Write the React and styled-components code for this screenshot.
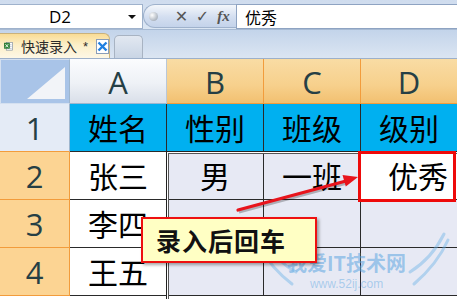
import React from "react";
import styled, { createGlobalStyle, css } from "styled-components";

const Global = createGlobalStyle`
  html, body { margin: 0; padding: 0; background: #fff; }
  body { width: 457px; height: 299px; overflow: hidden; font-family: "Noto Sans", "Noto Sans CJK SC", sans-serif; }
`;

const Page = styled.div`
  position: relative;
  width: 457px;
  height: 299px;
  overflow: hidden;
  display: flex;
  flex-direction: column;
`;

/* ---------- formula bar ---------- */
const FormulaBar = styled.div`
  height: 30px;
  flex: none;
  display: flex;
  align-items: flex-start;
  padding-top: 4px;
  box-sizing: border-box;
  background: linear-gradient(#cfdcee, #dbe6f3);
  border-bottom: 1px solid #a7bad3;
`;

const NameBox = styled.div`
  width: 143px;
  height: 25px;
  box-sizing: border-box;
  background: #fff;
  border: 1px solid #9fb2cc;
  border-left: none;
  display: flex;
  align-items: center;
  position: relative;
  font-family: "Open Sans", "Liberation Sans", sans-serif;
  font-size: 17px;
  color: #000;
`;

const NameText = styled.span`
  flex: 1;
  text-align: center;
  padding-right: 22px;
`;

const DropArrow = styled.span`
  position: absolute;
  right: 6px;
  top: 10px;
  width: 0;
  height: 0;
  border-left: 4px solid transparent;
  border-right: 4px solid transparent;
  border-top: 4px solid #111;
`;

const FxPill = styled.div`
  width: 93px;
  height: 24px;
  box-sizing: border-box;
  border: 1px solid #9fb2cc;
  border-right: none;
  border-radius: 12px 0 0 12px;
  background: linear-gradient(#f4f7fb, #d3def0 55%, #c4d3ea);
  display: flex;
  align-items: center;
  padding-left: 5px;
`;

const Knob = styled.span`
  width: 9px;
  height: 9px;
  border-radius: 50%;
  background: radial-gradient(circle at 35% 35%, #fff, #b9c0c9 60%, #8f98a3);
  margin-right: 13px;
`;

const FxIcon = styled.span`
  width: 21px;
  display: flex;
  justify-content: center;
  color: #555;
  font-size: ${(p) => p.$size || 15}px;
  font-family: ${(p) => (p.$serif ? '"Liberation Serif", serif' : '"DejaVu Sans", sans-serif')};
  font-style: ${(p) => (p.$serif ? "italic" : "normal")};
  font-weight: bold;
`;

const FormulaInput = styled.div`
  flex: 1;
  height: 25px;
  box-sizing: border-box;
  background: #fff;
  border: 1px solid #8ea3c2;
  border-right: none;
  display: flex;
  align-items: center;
  padding-left: 8px;
  font-family: "Noto Sans CJK SC", sans-serif;
  font-size: 16px;
  color: #000;
`;

/* ---------- tab strip ---------- */
const TabStrip = styled.div`
  height: 29px;
  flex: none;
  box-sizing: border-box;
  background: linear-gradient(#c3d4ea, #dbe5f2);
  border-bottom: 1px solid #9db0ca;
  display: flex;
  align-items: flex-end;
  gap: 4px;
  padding-top: 3px;
`;

const Tab = styled.div`
  width: 110px;
  height: 25px;
  box-sizing: border-box;
  border: 1px solid #c9b27c;
  border-bottom: none;
  border-left: none;
  border-radius: 0 6px 0 0;
  background: linear-gradient(#f9dc95, #fcefc8 45%, #fdf7e6);
  display: flex;
  align-items: center;
  padding-left: 4px;
  font-family: "Noto Sans CJK SC", sans-serif;
  font-size: 14px;
  color: #2b2b2b;
`;

const Label = styled.span`
  margin-left: 8px;
  white-space: nowrap;
`;

const Star = styled.span`
  margin-left: 6px;
  font-family: "Liberation Sans", sans-serif;
  font-size: 13px;
`;

const CloseBox = styled.span`
  margin-left: 8px;
  width: 15px;
  height: 15px;
  box-sizing: border-box;
  border: 1px solid #8a9db8;
  background: #fff;
  display: flex;
  align-items: center;
  justify-content: center;
`;

const EmptyTab = styled.div`
  width: 29px;
  height: 23px;
  box-sizing: border-box;
  border: 1px solid #a8b3c2;
  border-bottom: none;
  border-radius: 5px 5px 0 0;
  background: linear-gradient(#e2e8f1, #c9d5e5);
`;

/* ---------- sheet ---------- */
const Grid = styled.div`
  display: grid;
  grid-template-columns: 70px repeat(4, 97px);
  grid-template-rows: 45px repeat(4, 48px);
  flex: none;
`;

const Corner = styled.div`
  box-sizing: border-box;
  background: #a9c4e8;
  border: 1px solid #d4e0f0;
  border-right: 1px solid #9eb6ce;
  position: relative;
  &::after {
    content: "";
    position: absolute;
    right: 4px;
    bottom: 4px;
    width: 0;
    height: 0;
    border-left: 38px solid transparent;
    border-bottom: 32px solid #f2f4f8;
  }
`;

const headFont = css`
  font-family: "Open Sans", "Liberation Sans", sans-serif;
  font-size: 31px;
  color: #263f45;
  display: flex;
  align-items: center;
  box-sizing: border-box;
`;

const ColHead = styled.div`
  ${headFont}
  justify-content: center;
  padding-top: 2px;
  background: ${(p) =>
    p.$on
      ? "linear-gradient(#f9dca4, #f7d08c 60%, #f2c070)"
      : "linear-gradient(#fbfcfe, #eef1f6 55%, #d9dfe9)"};
  border-right: 1px solid ${(p) => (p.$on ? "#f29c3c" : "#b9c7d8")};
  border-bottom: 1px solid ${(p) => (p.$on ? "#f29c3c" : "#9eb6ce")};
`;

const RowHead = styled.div`
  ${headFont}
  justify-content: center;
  background: ${(p) => (p.$on ? "#fcd493" : "#e4ebf6")};
  border-right: 1px solid ${(p) => (p.$on ? "#f29c3c" : "#9eb6ce")};
  border-bottom: 1px solid #f29c3c;
`;

const fills = {
  blue: "#00b0f0",
  white: "#ffffff",
  sel: "#e7e9f4",
};

const Cell = styled.div`
  box-sizing: border-box;
  background: ${(p) => fills[p.$fill]};
  border-right: 1px solid #2a2a2a;
  border-bottom: 1px solid #2a2a2a;
  display: flex;
  align-items: center;
  justify-content: ${(p) => (p.$offset ? "flex-start" : "center")};
  padding-left: ${(p) => (p.$offset ? "27px" : "0")};
  padding-bottom: 2px;
  font-family: "Noto Sans CJK SC", sans-serif;
  font-size: 30px;
  color: #000;
  white-space: nowrap;
  overflow: hidden;
`;

/* ---------- overlays ---------- */
const SelectionFrame = styled.div`
  position: absolute;
  left: 166px;
  top: 151px;
  width: 300px;
  height: 160px;
  box-sizing: border-box;
  border: 1px solid #222;
  box-shadow: inset 0 0 0 1px #fff, inset 0 0 0 2px #555;
  pointer-events: none;
`;

const RedFrame = styled.div`
  position: absolute;
  left: 358px;
  top: 151px;
  width: 98px;
  height: 51px;
  box-sizing: border-box;
  border: 3px solid #ee0a0a;
  pointer-events: none;
`;

const Callout = styled.div`
  position: absolute;
  left: 141px;
  top: 217px;
  width: 176px;
  height: 46px;
  box-sizing: border-box;
  border: 2px solid #ee1010;
  background: #ffffc4;
  box-shadow: 2px 2px 3px rgba(0, 0, 0, 0.35);
  display: flex;
  align-items: center;
  padding-left: 13px;
  font-family: "Noto Sans CJK SC", sans-serif;
  font-weight: bold;
  font-size: 25px;
  color: #111;
  letter-spacing: 1px;
`;

const Overlay = styled.svg`
  position: absolute;
  left: 0;
  top: 0;
  pointer-events: none;
`;

const Watermark = styled.div`
  position: absolute;
  left: 287px;
  top: 249px;
  display: flex;
  flex-direction: column;
  align-items: center;
  pointer-events: none;
  color: rgba(90, 165, 225, 0.55);
`;

const WmTitle = styled.span`
  font-family: "Noto Sans CJK SC", sans-serif;
  font-weight: bold;
  font-size: 20px;
  line-height: 28px;
`;

const WmUrl = styled.span`
  font-family: "Liberation Sans", sans-serif;
  font-size: 12px;
  line-height: 14px;
  color: rgba(90, 165, 225, 0.45);
`;

const cols = ["A", "B", "C", "D"];
const rows = [
  ["姓名", "性别", "班级", "级别"],
  ["张三", "男", "一班", "优秀"],
  ["李四", "", "", ""],
  ["王五", "", "", ""],
];

function ExcelIcon() {
  return (
    <svg width="14" height="14" viewBox="0 0 14 14">
      <rect x="3.5" y="1.5" width="10" height="12" fill="#fff" stroke="#7a8a9a" />
      <line x1="6" y1="5" x2="12" y2="5" stroke="#9fb0c0" />
      <line x1="6" y1="8" x2="12" y2="8" stroke="#9fb0c0" />
      <line x1="6" y1="11" x2="12" y2="11" stroke="#9fb0c0" />
      <rect x="0.5" y="2.5" width="8" height="8" fill="#2f8a3a" stroke="#1f6a2a" />
      <path d="M2.3 4.2 L6.7 9 M6.7 4.2 L2.3 9" stroke="#fff" strokeWidth="1.4" />
    </svg>
  );
}

function CloseX() {
  return (
    <svg width="11" height="11" viewBox="0 0 11 11">
      <path d="M1.5 1.5 L9.5 9.5 M9.5 1.5 L1.5 9.5" stroke="#1f7fe0" strokeWidth="2.4" />
    </svg>
  );
}

export default function App() {
  return (
    <Page>
      <Global />
      <FormulaBar>
        <NameBox>
          <NameText>D2</NameText>
          <DropArrow />
        </NameBox>
        <FxPill>
          <Knob />
          <FxIcon $size={16}>✕</FxIcon>
          <FxIcon $size={16}>✓</FxIcon>
          <FxIcon $serif $size={15}>fx</FxIcon>
        </FxPill>
        <FormulaInput>优秀</FormulaInput>
      </FormulaBar>

      <TabStrip>
        <Tab>
          <ExcelIcon />
          <Label>快速录入</Label>
          <Star>*</Star>
          <CloseBox>
            <CloseX />
          </CloseBox>
        </Tab>
        <EmptyTab />
      </TabStrip>

      <Grid>
        <Corner />
        {cols.map((c, i) => (
          <ColHead key={c} $on={i > 0}>
            {c}
          </ColHead>
        ))}
        {rows.map((r, ri) => (
          <React.Fragment key={ri}>
            <RowHead $on={ri > 0}>{ri + 1}</RowHead>
            {r.map((v, ci) => {
              let fill = "white";
              if (ri === 0) fill = "blue";
              else if (ci > 0 && !(ri === 1 && ci === 3)) fill = "sel";
              return (
                <Cell key={ci} $fill={fill} $offset={ri === 1 && ci === 3}>
                  {v}
                </Cell>
              );
            })}
          </React.Fragment>
        ))}
      </Grid>

      <SelectionFrame />
      <RedFrame />

      <Watermark>
        <WmTitle>我爱IT技术网</WmTitle>
        <WmUrl>www.52ij.com</WmUrl>
      </Watermark>

      <Overlay width="457" height="299" viewBox="0 0 457 299">
        <g fill="none" stroke="rgba(110,180,230,0.45)" strokeWidth="3" strokeLinecap="round">
          <path d="M258 245 C 268 262, 280 275, 292 284" />
          <path d="M262 238 C 274 256, 284 266, 296 272" />
          <path d="M448 240 C 440 258, 428 272, 414 284" />
          <path d="M444 234 C 436 250, 426 262, 410 272" />
        </g>
        <line x1="238" y1="210" x2="346" y2="181" stroke="rgba(0,0,0,0.25)" strokeWidth="3" transform="translate(1,2)" />
        <line x1="238" y1="210" x2="346" y2="181" stroke="#e8141c" strokeWidth="3.2" strokeLinecap="round" />
        <polygon points="358,177 345.8,186.5 342.5,174.9" fill="#e8141c" />
      </Overlay>

      <Callout>录入后回车</Callout>
    </Page>
  );
}
